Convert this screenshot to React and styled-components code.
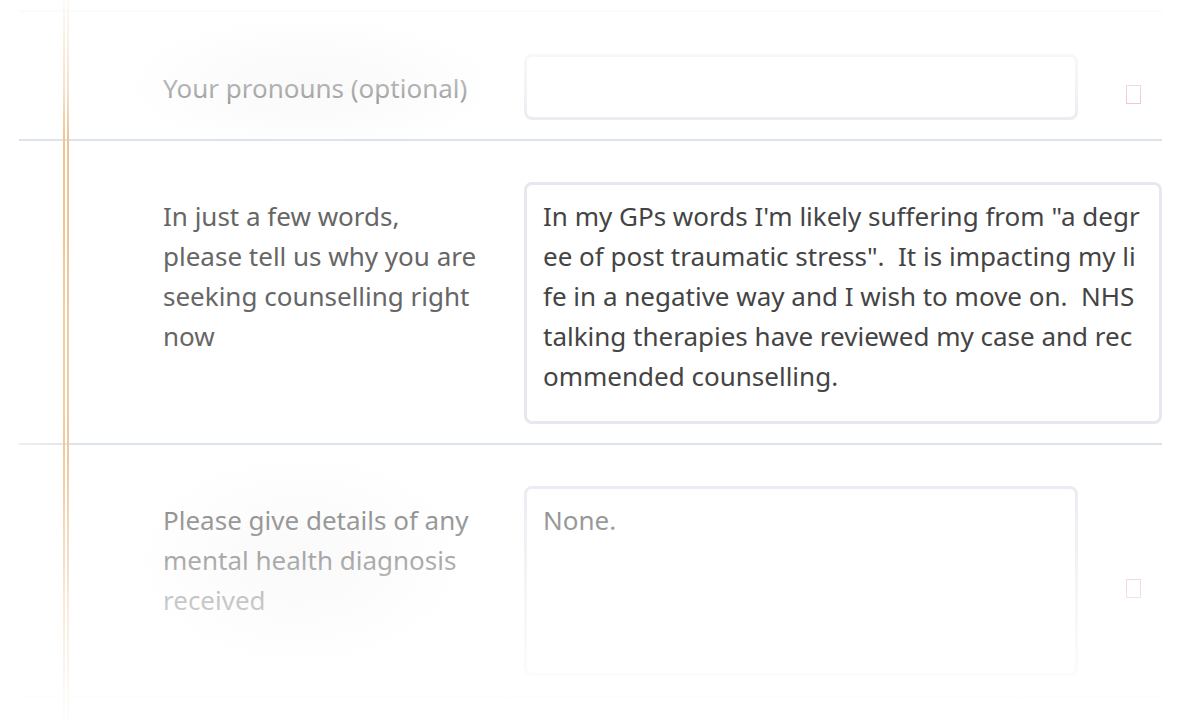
import React from "react";
import styled, { createGlobalStyle } from "styled-components";

const Global = createGlobalStyle`
  html, body { margin: 0; padding: 0; background: #ffffff; }
  body { font-family: "Noto Sans", "Open Sans", sans-serif; overflow: hidden; }
  * { box-sizing: border-box; }
`;

const Page = styled.div`
  position: relative;
  width: 1180px;
  height: 719px;
  overflow: hidden;
  background: #ffffff;
  padding-top: 10px;
`;

const Form = styled.div`
  margin-left: 19px;
  width: 1143px;
  border-bottom: 2px solid #dde3ea;
`;

const Row = styled.div`
  display: flex;
  align-items: flex-start;
  border-top: 2px solid #dde3ea;
  padding: 41px 0 19px 144px;
  &:first-child { padding-top: 42px; }
`;

const Label = styled.div`
  width: 318px;
  margin-right: 43px;
  padding-top: 14px;
  font-size: 26px;
  line-height: 40px;
  color: #666666;
`;

const Field = styled.div`
  flex: none;
  width: ${(p) => (p.$wide ? 638 : 554)}px;
  height: ${(p) => p.$h}px;
  border: 3px solid #e6e8ef;
  border-radius: 8px;
  padding: 11px 16px 12px;
  font-size: 26px;
  line-height: 40px;
  color: ${(p) => (p.$muted ? "#666666" : "#444444")};
  white-space: pre-wrap;
  word-break: break-all;
  background: #ffffff;
`;

const Missing = styled.span`
  flex: none;
  align-self: center;
  margin-left: 48px;
  margin-top: 14px;
  width: 15px;
  height: 19px;
  border: 1px solid #eba9a9;
`;

const MarginLines = styled.div`
  position: absolute;
  top: 0;
  left: 63px;
  width: 6px;
  height: 719px;
  border-left: 2px solid #efc493;
  border-right: 2px solid #efc493;
  pointer-events: none;
`;

const Fade = styled.div`
  position: absolute;
  inset: 0;
  pointer-events: none;
  background:
    radial-gradient(ellipse 190px 70px at 310px 85px, rgba(120,120,120,0.045), rgba(120,120,120,0) 100%),
    radial-gradient(ellipse 170px 110px at 300px 560px, rgba(120,120,120,0.04), rgba(120,120,120,0) 100%),
    radial-gradient(ellipse 60px 200px at 20px 360px, rgba(255,255,255,0.7), rgba(255,255,255,0) 100%),
    linear-gradient(
      to bottom,
      rgba(255,255,255,0.93) 0px,
      rgba(255,255,255,0.85) 14px,
      rgba(255,255,255,0.5) 89px,
      rgba(255,255,255,0.1) 128px,
      rgba(255,255,255,0) 140px,
      rgba(255,255,255,0) 445px,
      rgba(255,255,255,0.2) 490px,
      rgba(255,255,255,0.33) 521px,
      rgba(255,255,255,0.45) 561px,
      rgba(255,255,255,0.64) 601px,
      rgba(255,255,255,0.8) 660px,
      rgba(255,255,255,0.92) 695px,
      rgba(255,255,255,0.95) 719px
    );
`;

const reason =
  'In my GPs words I\'m likely suffering from "a degree of post traumatic stress".  It is impacting my life in a negative way and I wish to move on.  NHS talking therapies have reviewed my case and recommended counselling.';

export default function App() {
  return (
    <>
      <Global />
      <Page>
        <Form>
          <Row>
            <Label>Your pronouns (optional)</Label>
            <Field $h={66} />
            <Missing />
          </Row>
          <Row>
            <Label>In just a few words, please tell us why you are seeking counselling right now</Label>
            <Field $wide $h={242}>{reason}</Field>
          </Row>
          <Row>
            <Label>Please give details of any mental health diagnosis received</Label>
            <Field $h={190} $muted>None.</Field>
            <Missing />
          </Row>
        </Form>
        <MarginLines />
        <Fade />
      </Page>
    </>
  );
}
